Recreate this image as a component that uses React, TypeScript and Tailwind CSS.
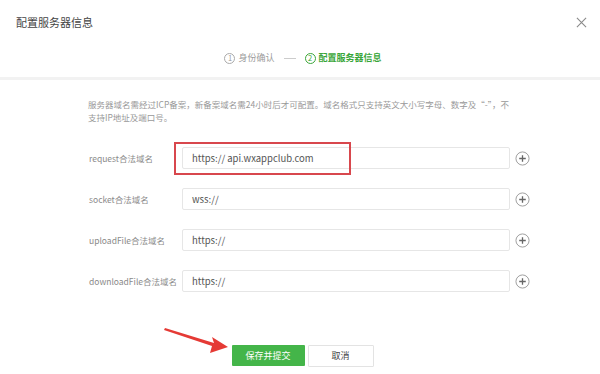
import React from 'react';

const FONT = "font-['Noto_Sans_CJK_SC','Noto_Sans',sans-serif]";

const rows = [
  { label: 'request合法域名', value: 'https:// api.wxappclub.com', highlight: true },
  { label: 'socket合法域名', value: 'wss://' },
  { label: 'uploadFile合法域名', value: 'https://' },
  { label: 'downloadFile合法域名', value: 'https://' },
];

function PlusCircle() {
  return (
    <svg width="15" height="15" viewBox="0 0 16 16" className="shrink-0">
      <circle cx="8" cy="8" r="7" fill="none" stroke="#9a9a9a" strokeWidth="1" />
      <path d="M8 4.5v7M4.5 8h7" stroke="#666" strokeWidth="1.4" />
    </svg>
  );
}

export default function App() {
  return (
    <div className={`w-[600px] h-[374px] bg-white overflow-hidden ${FONT}`}>
      {/* header */}
      <div className="h-[77px] flex flex-col">
        <div className="flex items-center justify-between pl-[16px] pr-[13px] pt-[14px]">
          <span className="text-[11px] text-[#444] leading-[16px]">配置服务器信息</span>
          <svg width="11" height="11" viewBox="0 0 12 12">
            <path d="M1 1l10 10M11 1L1 11" stroke="#8a8a8a" strokeWidth="1.2" />
          </svg>
        </div>
        <div className="flex items-center justify-center gap-[7px] mt-[22px] pl-[6px] text-[9px] leading-[12px]">
          <span className="flex items-center gap-[3px] text-[#9a9a9a]">
            <span className="w-[11px] h-[11px] rounded-full border border-[#aaa] flex items-center justify-center text-[7.5px] leading-none">1</span>
            身份确认
          </span>
          <span className="w-[12px] h-px bg-[#ccc] mx-[2px]" />
          <span className="flex items-center gap-[3px] text-[#3aa63a] font-semibold">
            <span className="w-[11px] h-[11px] rounded-full border border-[#3aa63a] flex items-center justify-center text-[7.5px] leading-none font-normal">2</span>
            配置服务器信息
          </span>
        </div>
      </div>
      <div className="h-[3px] bg-[#f2f2f2]" />

      {/* body */}
      <div className="pl-[88px] pt-[18px] text-[8.5px] leading-[13px] text-[#999]">
        <p>服务器域名需经过ICP备案，新备案域名需24小时后才可配置。域名格式只支持英文大小写字母、数字及“-”，不</p>
        <p>支持IP地址及端口号。</p>
      </div>

      <div className="flex flex-col gap-[19px] mt-[23px] pl-[89px]">
        {rows.map((r) => (
          <div key={r.label} className="flex items-center h-[22px]">
            <span className="w-[93px] whitespace-nowrap text-[8.5px] text-[#8a8a8a]">{r.label}</span>
            <div className="relative w-[328px] h-[22px] border border-[#e6e6e6] rounded-[2px] flex items-center pl-[9px] text-[9.5px] text-[#555]">
              {r.value}
              {r.highlight && (
                <div className="absolute left-[-9px] top-[-6px] w-[177px] h-[33px] border-2 border-[#d8474d]" />
              )}
            </div>
            <div className="ml-[5px] w-[15px] flex justify-center">
              <PlusCircle />
            </div>
          </div>
        ))}
      </div>

      {/* actions */}
      <div className="relative flex justify-center gap-[3px] mt-[53px] pl-[5px]">
        <button className="w-[73px] h-[21px] bg-[#44b549] text-white text-[9px] rounded-[1px]">保存并提交</button>
        <button className="w-[66px] h-[22px] bg-white border border-[#e3e3e3] text-[#444] text-[9px] rounded-[1px]">取消</button>
        <svg className="absolute left-[160px] top-[-20px]" width="72" height="30" viewBox="0 0 72 30">
          <path d="M5 3 L54 18 L52 12 L68 22 L50 28 L52 21 L4 5 Z" fill="#e53a35" />
        </svg>
      </div>
    </div>
  );
}
